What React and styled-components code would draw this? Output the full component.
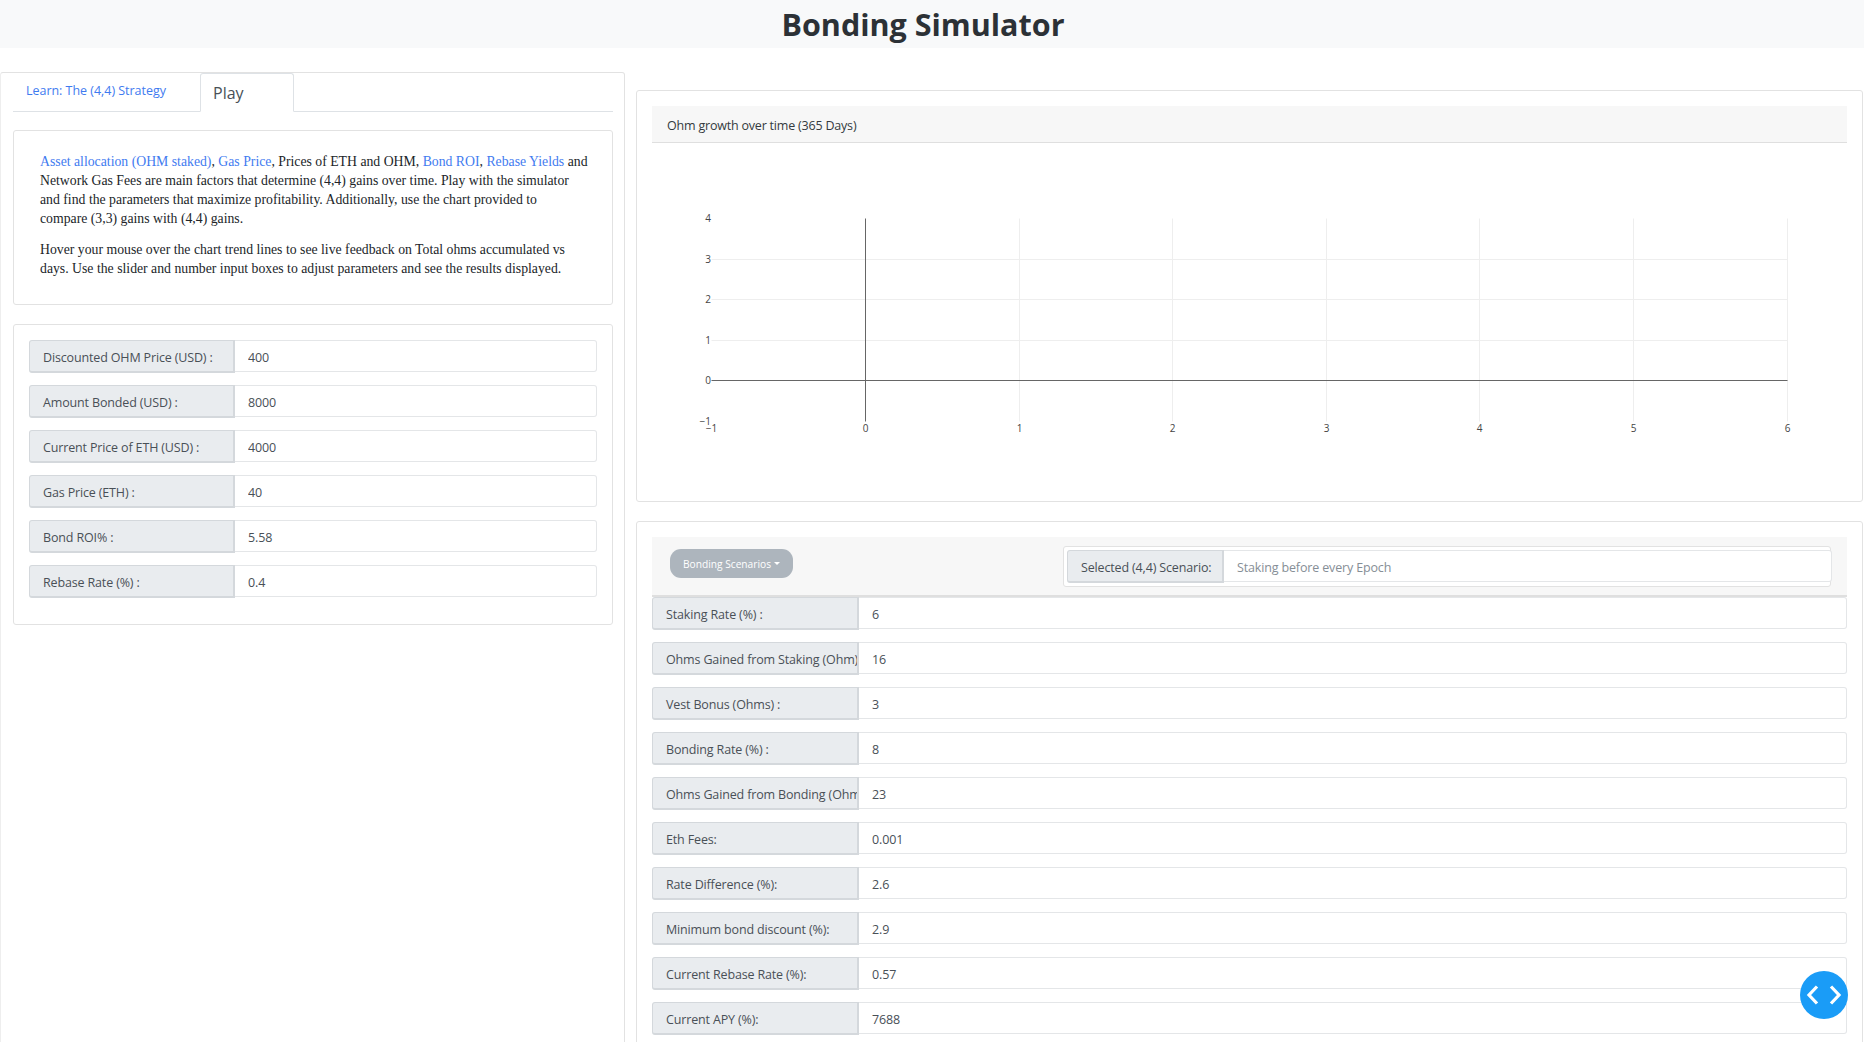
import styled, { createGlobalStyle } from 'styled-components'

const GlobalStyle = createGlobalStyle`
  html, body {
    margin: 0;
    height: 100%;
    overflow: hidden;
    background: #fff;
    font-family: "Open Sans", "Liberation Sans", sans-serif;
  }
  * { box-sizing: border-box; }
`

const Page = styled.div`
  height: 100vh;
  overflow: hidden;
`

const Header = styled.header`
  height: 48px;
  padding-right: 18px;
  background: #f8f9fa;
  display: flex;
  align-items: center;
  justify-content: center;
`

const Title = styled.h1`
  margin: 0;
  font-size: 30.5px;
  font-weight: 700;
  color: #2c3136;
`

const Columns = styled.div`
  display: grid;
  grid-template-columns: 625px 1227px;
  column-gap: 11px;
  align-items: start;
`

const LeftPanel = styled.section`
  margin-top: 24px;
  height: 1200px;
  padding: 0 11px 0 12px;
  border: 1px solid #e2e2e2;
  border-left-color: #eee;
  border-radius: 3px;
`

const Tabs = styled.nav`
  display: flex;
  height: 39px;
  border-bottom: 1px solid #dee2e6;
`

const LearnTab = styled.a`
  width: 187px;
  padding: 9px 0 0 13px;
  font-size: 12.5px;
  letter-spacing: -0.03px;
  color: #3f7bf0;
`

const PlayTab = styled.a`
  width: 94px;
  height: 39px;
  padding: 8px 0 0 12px;
  font-size: 16px;
  color: #495057;
  background: #fff;
  border: 1px solid #dee2e6;
  border-bottom-color: #fff;
  border-radius: 3px 3px 0 0;
`

const Card = styled.div`
  margin-top: 18px;
  border: 1px solid #e2e2e2;
  border-radius: 3px;
  background: #fff;
`

const IntroCard = styled(Card)`
  height: 175px;
  padding: 21px 20px 0 26px;
  font-family: "Liberation Serif", "Times New Roman", serif;
  font-size: 13.75px;
  line-height: 19px;
  color: #212529;

  p {
    margin: 0 0 12px;
  }

  a {
    color: #3f7bf0;
  }
`

const FormCard = styled(Card)`
  margin-top: 19px;
  padding: 15px 15px 14px;
`

const Row = styled.div`
  display: flex;
  margin-bottom: 12px;
  height: 33px;
`

const RowLabel = styled.label`
  flex: 0 0 ${p => p.$width}px;
  display: flex;
  align-items: center;
  padding: 2px 0 0 13px;
  font-size: 12.5px;
  letter-spacing: -0.15px;
  color: #495057;
  white-space: nowrap;
  overflow: hidden;
  background: #e9ecef;
  border: 1px solid #d4d8dc;
  border-right-width: 2px;
  border-bottom-width: 2px;
  border-radius: 3px 0 0 3px;
`

const RowInput = styled.input`
  flex: 1;
  min-width: 0;
  height: 32px;
  padding: 2px 13px 0;
  font-family: inherit;
  font-size: 12.5px;
  letter-spacing: -0.15px;
  color: #495057;
  background: #fff;
  border: 1px solid #e4e6e8;
  border-left: 0;
  border-radius: 0 3px 3px 0;
  outline: none;

  &::placeholder {
    color: #868e96;
  }
`

const ChartCard = styled(Card)`
  margin-top: 42px;
  height: 412px;
  padding: 15px 15px 0;
`

const CardHeader = styled.div`
  height: 37px;
  padding: 2px 0 0 15px;
  display: flex;
  align-items: center;
  font-size: 12.5px;
  letter-spacing: -0.2px;
  color: #343a40;
  background: #f7f7f7;
  border-bottom: 1px solid #dfdfdf;
`

const ChartSvg = styled.svg`
  display: block;
  font-family: "Open Sans", "Liberation Sans", sans-serif;
  font-size: 10px;
  fill: #444;
`

const ScenarioCard = styled(Card)`
  margin-top: 19px;
  height: 1000px;
  padding: 15px 15px 0;
`

const ScenarioHeader = styled.div`
  height: 60px;
  padding: 9px 16px 0 18px;
  display: flex;
  justify-content: space-between;
  align-items: flex-start;
  background: #f7f7f7;
  border-bottom: 2px solid #dfdfdf;
`

const ScenarioButton = styled.button`
  width: 123px;
  height: 29px;
  margin-top: 3px;
  padding: 0;
  display: flex;
  align-items: center;
  justify-content: center;
  gap: 3px;
  font-family: inherit;
  font-size: 10.2px;
  color: #fff;
  background: #adb5bd;
  border: 0;
  border-radius: 11px;

  &::after {
    content: '';
    border-top: 3px solid #fff;
    border-left: 3px solid transparent;
    border-right: 3px solid transparent;
  }
`

const ScenarioGroup = styled.div`
  width: 768px;
  height: 41px;
  padding: 3px 0 0 3px;
  background: #fff;
  border: 1px solid #e2e2e2;
  border-radius: 3px;
`

const ScenarioRow = styled(Row)`
  width: 765px;
  margin: 0;
`

const RowList = styled.div`
  display: flex;
  flex-direction: column;
`

const FloatingToggle = styled.button`
  position: fixed;
  left: 1800px;
  top: 971px;
  width: 48px;
  height: 48px;
  padding: 0;
  display: flex;
  align-items: center;
  justify-content: center;
  background: #1a9cf7;
  border: 0;
  border-radius: 50%;
`

const inputs = [
  ['Discounted OHM Price (USD) :', '400'],
  ['Amount Bonded (USD) :', '8000'],
  ['Current Price of ETH (USD) :', '4000'],
  ['Gas Price (ETH) :', '40'],
  ['Bond ROI% :', '5.58'],
  ['Rebase Rate (%) :', '0.4'],
]

const results = [
  ['Staking Rate (%) :', '6'],
  ['Ohms Gained from Staking (Ohm) :', '16'],
  ['Vest Bonus (Ohms) :', '3'],
  ['Bonding Rate (%) :', '8'],
  ['Ohms Gained from Bonding (Ohms) :', '23'],
  ['Eth Fees:', '0.001'],
  ['Rate Difference (%):', '2.6'],
  ['Minimum bond discount (%):', '2.9'],
  ['Current Rebase Rate (%):', '0.57'],
  ['Current APY (%):', '7688'],
]

// plot coordinates, measured from the card header
const xAt = v => Math.round(213 + v * 153.6) + 0.5
const yAt = v => Math.round(237 - v * 40.5) + 0.5

const Chart = () => {
  const xs = [-1, 0, 1, 2, 3, 4, 5, 6]
  const ys = [-1, 0, 1, 2, 3, 4]
  return (
    <ChartSvg width="1194" height="343">
      {xs.filter(v => v > 0).map(v => (
        <line key={v} x1={xAt(v)} x2={xAt(v)} y1={yAt(4)} y2={yAt(-1)} stroke="#eee" />
      ))}
      {ys.filter(v => v > 0 && v < 4).map(v => (
        <line key={v} x1={xAt(-1)} x2={xAt(6)} y1={yAt(v)} y2={yAt(v)} stroke="#eee" />
      ))}
      <line x1={xAt(0)} x2={xAt(0)} y1={yAt(4)} y2={yAt(-1)} stroke="#666" />
      <line x1={xAt(-1)} x2={xAt(6)} y1={yAt(0)} y2={yAt(0)} stroke="#666" />
      {xs.map(v => (
        <text key={v} x={xAt(v)} y={289} textAnchor="middle">
          {String(v).replace('-', '\u2212')}
        </text>
      ))}
      {ys.map(v => (
        <text key={v} x={59} y={yAt(v) + 3} textAnchor="end">
          {String(v).replace('-', '\u2212')}
        </text>
      ))}
    </ChartSvg>
  )
}

const App = () => (
  <Page>
    <GlobalStyle />
    <Header>
      <Title>Bonding Simulator</Title>
    </Header>
    <Columns>
      <LeftPanel>
        <Tabs>
          <LearnTab>Learn: The (4,4) Strategy</LearnTab>
          <PlayTab>Play</PlayTab>
        </Tabs>
        <IntroCard>
          <p>
            <a>Asset allocation (OHM staked)</a>, <a>Gas Price</a>, Prices of ETH and OHM,{' '}
            <a>Bond ROI</a>, <a>Rebase Yields</a> and Network Gas Fees are main factors that
            determine (4,4) gains over time. Play with the simulator and find the parameters
            that maximize profitability. Additionally, use the chart provided to
            <br />
            compare (3,3) gains with (4,4) gains.
          </p>
          <p>
            Hover your mouse over the chart trend lines to see live feedback on Total ohms
            accumulated vs days. Use the slider and number input boxes to adjust parameters and
            see the results displayed.
          </p>
        </IntroCard>
        <FormCard>
          {inputs.map(([label, value]) => (
            <Row key={label}>
              <RowLabel $width={206}>{label}</RowLabel>
              <RowInput readOnly defaultValue={value} />
            </Row>
          ))}
        </FormCard>
      </LeftPanel>

      <div>
        <ChartCard>
          <CardHeader>Ohm growth over time (365 Days)</CardHeader>
          <Chart />
        </ChartCard>
        <ScenarioCard>
          <ScenarioHeader>
            <ScenarioButton>Bonding Scenarios</ScenarioButton>
            <ScenarioGroup>
              <ScenarioRow>
                <RowLabel $width={157}>Selected (4,4) Scenario:</RowLabel>
                <RowInput readOnly placeholder="Staking before every Epoch" />
              </ScenarioRow>
            </ScenarioGroup>
          </ScenarioHeader>
          <RowList>
            {results.map(([label, value]) => (
              <Row key={label}>
                <RowLabel $width={207}>{label}</RowLabel>
                <RowInput readOnly defaultValue={value} />
              </Row>
            ))}
          </RowList>
        </ScenarioCard>
      </div>
    </Columns>
    <FloatingToggle aria-label="toggle code">
      <svg width="36" height="24" viewBox="0 0 36 24" fill="none" stroke="#fff" strokeWidth="3.2">
        <path d="M11 3.5 3 12 11 20.5" />
        <path d="M25 3.5 33 12 25 20.5" />
      </svg>
    </FloatingToggle>
  </Page>
)

export default App
